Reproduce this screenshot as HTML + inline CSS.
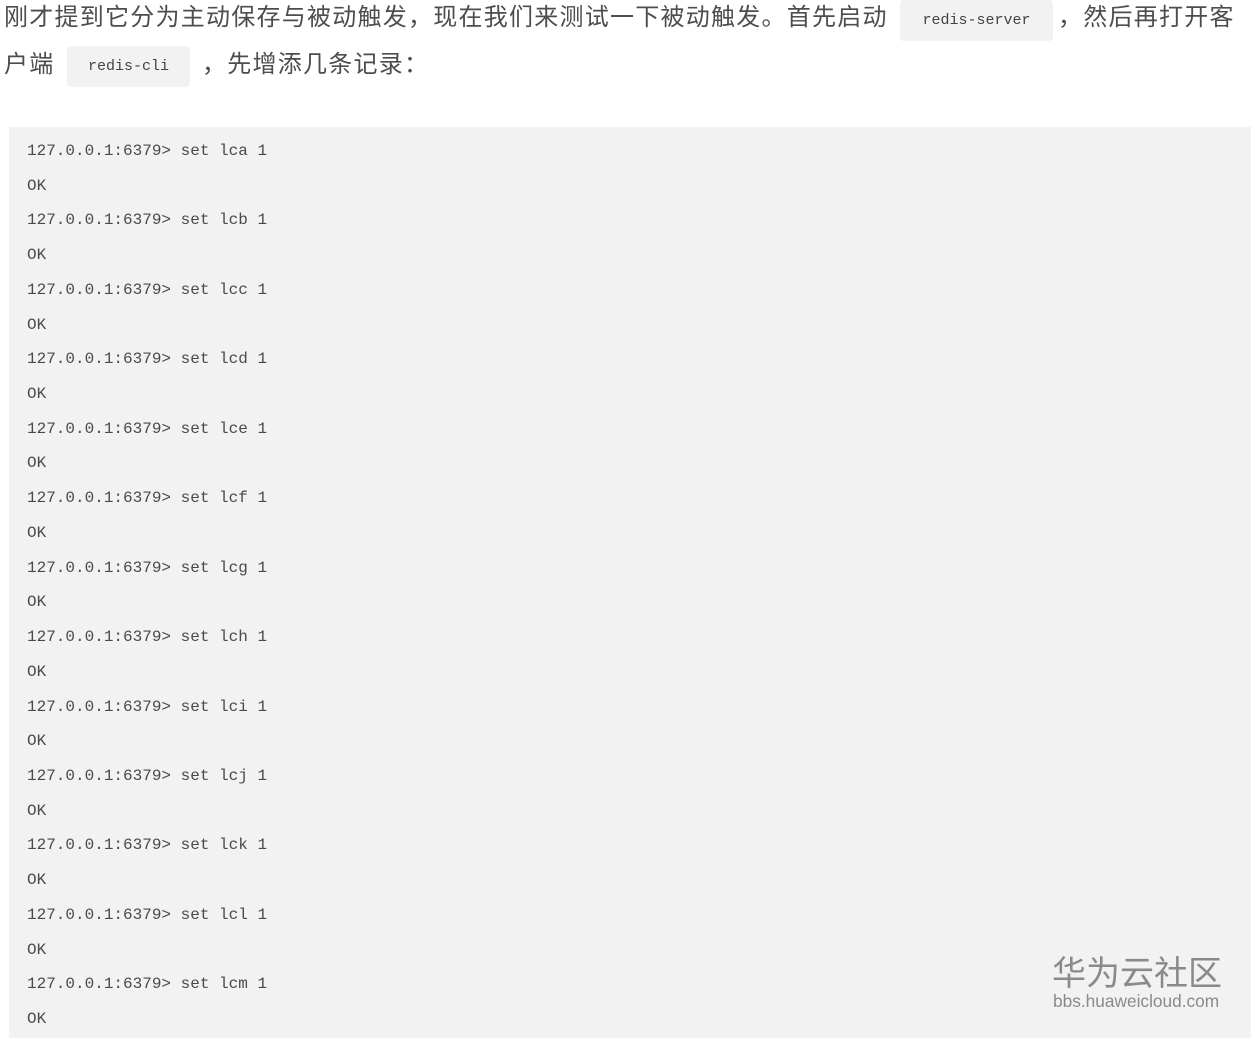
<!DOCTYPE html>
<html><head><meta charset="utf-8"><style>
body{margin:0;width:1251px;height:1038px;background:#fff;position:relative;overflow:hidden;font-family:"Liberation Sans","Noto Sans CJK SC",sans-serif;color:#4d4d4d}
.t{position:absolute;font-size:24px;line-height:34px;white-space:nowrap;letter-spacing:1.25px}
.c{position:absolute;background:#f2f2f2;border-radius:4px;font-family:"Liberation Mono",monospace;font-size:15px;color:#444;text-align:center;line-height:41px;height:41px}
pre{position:absolute;left:9px;top:127px;width:1242px;height:911px;margin:0;background:#f2f2f2;font-family:"Liberation Mono",monospace;font-size:16px;color:#4a4a4a;line-height:34.72px;padding:7px 0 0 18px;box-sizing:border-box}
.w{position:absolute;left:1052px;top:955px;color:#8a8a8a;font-size:34px;line-height:38px}
.w2{position:absolute;left:1053px;top:991px;color:#8a8a8a;font-size:17.3px}
</style></head><body>
<div class="t" style="left:4px;top:1px">刚才提到它分为主动保存与被动触发，现在我们来测试一下被动触发。首先启动</div>
<div class="c" style="left:900px;top:0;width:153px">redis-server</div>
<div class="t" style="left:1058px;top:1px">，然后再打开客</div>
<div class="t" style="left:4px;top:48px">户端</div>
<div class="c" style="left:67px;top:46px;width:123px">redis-cli</div>
<div class="t" style="left:202px;top:48px">，先增添几条记录：</div>
<pre>127.0.0.1:6379&gt; set lca 1
OK
127.0.0.1:6379&gt; set lcb 1
OK
127.0.0.1:6379&gt; set lcc 1
OK
127.0.0.1:6379&gt; set lcd 1
OK
127.0.0.1:6379&gt; set lce 1
OK
127.0.0.1:6379&gt; set lcf 1
OK
127.0.0.1:6379&gt; set lcg 1
OK
127.0.0.1:6379&gt; set lch 1
OK
127.0.0.1:6379&gt; set lci 1
OK
127.0.0.1:6379&gt; set lcj 1
OK
127.0.0.1:6379&gt; set lck 1
OK
127.0.0.1:6379&gt; set lcl 1
OK
127.0.0.1:6379&gt; set lcm 1
OK</pre>
<div class="w">华为云社区</div>
<div class="w2">bbs.huaweicloud.com</div>
</body></html>
